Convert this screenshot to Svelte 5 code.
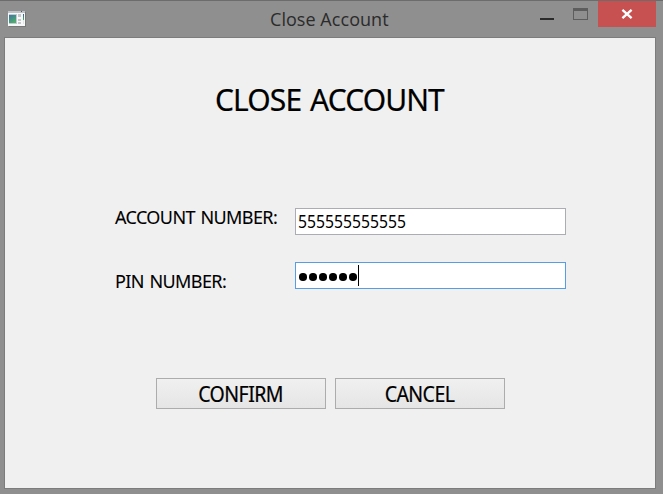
<script>
  let account = '555555555555';
  let pin = '●●●●●●';
</script>

<div class="window">
  <header>
    <svg class="app" width="18" height="16" viewBox="0 0 18 16">
      <rect x="1" y="1" width="17" height="15" fill="#777" />
      <rect width="17" height="15" fill="#f7f8fa" />
      <rect width="17" height="2" fill="#bfc3c8" />
      <rect x="13" width="1" height="1" fill="#555" />
      <rect x="1" y="3" width="8" height="10" fill="#c3c9d3" />
      <rect x="1" y="4" width="7" height="8" fill="url(#screen)" />
      <rect x="10" y="3" width="3" height="3" fill="#c5c7c9" />
      <rect x="10" y="8" width="3" height="2" fill="#c5c7c9" />
      <rect x="10" y="11" width="3" height="2" fill="#c5c7c9" />
      <rect x="15" y="3" width="1" height="6" fill="url(#bar)" />
      <rect x="15" y="9" width="1" height="4" fill="#e2e4e6" />
      <defs>
        <linearGradient id="screen" x1="0" y1="0" x2=".6" y2="1">
          <stop stop-color="#48759b" /><stop offset=".5" stop-color="#43908b" /><stop offset="1" stop-color="#4eae67" />
        </linearGradient>
        <linearGradient id="bar" gradientUnits="userSpaceOnUse" x1="0" y1="3" x2="0" y2="9">
          <stop stop-color="#405a98" /><stop offset="1" stop-color="#4cae62" />
        </linearGradient>
      </defs>
    </svg>
    <span class="title">Close Account</span>
    <svg class="tools" width="58" height="26" viewBox="0 0 58 26" shape-rendering="crispEdges">
      <rect x="0" y="17" width="14" height="2" fill="#2b2b2b" />
      <rect x="33.5" y="8.5" width="14" height="10" fill="none" stroke="#5d5d5d" />
      <rect x="33" y="7" width="15" height="3" fill="#5d5d5d" />
    </svg>
    <button class="close" aria-label="Close">
      <svg width="12" height="10" viewBox="0 0 12 10">
        <path d="M1.4 .8 10.6 9.2M10.6 .8 1.4 9.2" stroke="#fff" stroke-width="2.3" />
      </svg>
    </button>
  </header>
  <main>
    <h1>CLOSE ACCOUNT</h1>
    <div class="row first">
      <span class="label acc">ACCOUNT NUMBER:</span>
      <div class="field"><span class="digits">{account}</span></div>
    </div>
    <div class="row">
      <span class="label pin">PIN NUMBER:</span>
      <div class="field focus">
        <span class="dots">{#each pin as _}<i></i>{/each}</span><b class="caret"></b>
      </div>
    </div>
    <div class="actions">
      <button><span>CONFIRM</span></button>
      <button><span>CANCEL</span></button>
    </div>
  </main>
</div>

<style>
  :global(body) { background: #8f8f8f; overflow: hidden; }
  * { box-sizing: border-box; }
  .window { width: 663px; height: 494px; padding: 0 7px 5px 4px; background: #8f8f8f; border-top: 1px solid #6c6c6c; font-family: "Noto Sans", sans-serif; color: #000; }
  header { height: 36px; display: flex; align-items: flex-start; }
  svg { display: block; flex: none; }
  .app { margin: 10px 0 0 4px; }
  .title { flex: none; margin-left: 244px; width: 270px; line-height: 36px; font-size: 18px; letter-spacing: .05px; color: #2b2b2b; white-space: nowrap; font-family: "Open Sans", sans-serif; }
  .close { flex: none; width: 57px; height: 26px; border: 0; padding: 0 0 1px; background: #c75050; display: flex; align-items: center; justify-content: center; }
  header { width: 652px; }
  .close { width: 58px; }
  main { width: 652px; height: 452px; border: 1px solid #7c7c7c; background: #f0f0f0; display: flex; flex-direction: column; }
  h1, .actions span { -webkit-text-stroke: .2px #000; }
  .label { -webkit-text-stroke: .1px #000; }
  h1 { margin: 41px 0 0 210px; font-weight: 400; font-size: 30px; line-height: 42px; letter-spacing: -.9px; word-spacing: 2px; white-space: nowrap; }
  .row { display: flex; margin: 27px 0 0 110px; height: 27px; }
  .first { margin-top: 87px; }
  .label { width: 180px; font-size: 18px; line-height: 24px; letter-spacing: -.6px; word-spacing: 1.5px; white-space: nowrap; }
  .acc { margin-top: -3px; }
  .pin { margin-top: 7px; }
  .field { width: 271px; height: 27px; background: #fff; border: 1px solid #abadb3; padding-left: 2px; display: flex; align-items: center; }
  .focus { border-color: #569de5; }
  .digits { display: inline-block; font-size: 17.5px; line-height: 25px; letter-spacing: 0; transform: scaleX(.9); transform-origin: left; }
  .dots { display: flex; gap: 2.5px; padding: 3px 0 0 1px; }
  .dots i { width: 7.5px; height: 7.5px; border-radius: 50%; background: #000; }
  .caret { width: 1px; height: 21px; margin-left: 1px; background: #000; }
  .actions { display: flex; gap: 9px; margin: 89px 0 0 151px; }
  .actions button { width: 170px; height: 31px; padding: 0; border: 1px solid #acacac; background: linear-gradient(#f0f0f0, #e5e5e5); font: 21px/30px "Noto Sans", sans-serif; color: #000; }
  .actions span { display: inline-block; letter-spacing: -.6px; transform: scaleX(.93); }
</style>
